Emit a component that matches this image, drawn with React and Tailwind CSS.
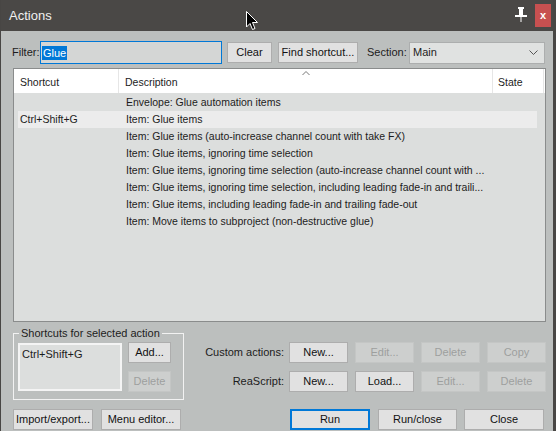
const rows = [
  { key: "", desc: "Envelope: Glue automation items" },
  { key: "Ctrl+Shift+G", desc: "Item: Glue items", selected: true },
  { key: "", desc: "Item: Glue items (auto-increase channel count with take FX)" },
  { key: "", desc: "Item: Glue items, ignoring time selection" },
  { key: "", desc: "Item: Glue items, ignoring time selection (auto-increase channel count with ..." },
  { key: "", desc: "Item: Glue items, ignoring time selection, including leading fade-in and traili..." },
  { key: "", desc: "Item: Glue items, including leading fade-in and trailing fade-out" },
  { key: "", desc: "Item: Move items to subproject (non-destructive glue)" },
];

// Win32-ish push button
const Btn = ({ children, w = "w-[59px]", disabled = false, primary = false, className = "" }) => {
  let look = "bg-[#e1e1e1] border border-[#adadad] text-[#111]";
  if (disabled) look = "bg-[#cdcfce] border border-[#c4c6c5] text-[#9d9f9e]";
  if (primary) look = "bg-[#e1e1e1] border-2 border-[#0078d7] text-[#111]";
  return (
    <div className={`${w} h-[21px] flex items-center justify-center text-[11px] leading-none ${look} ${className}`}>
      {children}
    </div>
  );
};

const Pin = () => (
  <svg width="12" height="15" viewBox="0 0 12 15" className="block">
    <rect x="3" y="0" width="6" height="2" fill="#fff" />
    <rect x="4" y="2" width="4" height="6" fill="#fff" />
    <rect x="0" y="8" width="12" height="2" fill="#fff" />
    <rect x="5.5" y="10" width="1" height="5" fill="#fff" />
  </svg>
);

const Cursor = () => (
  <svg width="13" height="20" viewBox="0 0 13 20" className="absolute left-[245px] top-[11px]">
    <path d="M0.5 0.5 L0.5 16 L4 12.5 L6.5 18.5 L9 17.5 L6.5 11.5 L11.5 11.5 Z" fill="#000" stroke="#fff" strokeWidth="1" strokeLinejoin="miter" />
  </svg>
);

export default function App() {
  return (
    <div className="w-[556px] h-[431px] bg-[#bcbfbe] flex flex-col overflow-hidden relative border-l border-r-[3px] border-[#484644] font-['Liberation_Sans',Arial,sans-serif] text-[#1c1c1c]">
      {/* Title bar */}
      <div className="h-[31px] shrink-0 bg-[#4a4846] flex items-center pl-[8px] pr-[2px]">
        <span className="text-[13px] text-[#f0f0f0]">Actions</span>
        <div className="flex-1" />
        <div className="mr-[8px] mt-[-2px]">
          <Pin />
        </div>
        <div className="w-[16px] h-[23px] bg-[#c75050] flex items-center justify-center text-white text-[11px] font-bold leading-none">
          x
        </div>
      </div>
      <Cursor />

      {/* Body */}
      <div className="flex-1 flex flex-col pl-[12px] pr-[7px] pt-[10px]">
        {/* Filter row */}
        <div className="h-[23px] flex items-center text-[11px]">
          <span className="w-[28px] -ml-px">Filter:</span>
          <div className="w-[182px] h-[23px] border border-[#0078d7] bg-[#d4d6d5] flex items-center pl-[1px]">
            <span className="bg-[#0078d7] text-white px-[1px] leading-[14px]">Glue</span>
          </div>
          <Btn w="w-[45px]" className="ml-[5px]">Clear</Btn>
          <Btn w="w-[80px]" className="ml-[6px]">Find shortcut...</Btn>
          <span className="ml-[9px] w-[42px]">Section:</span>
          <div className="w-[136px] h-[22px] border border-[#acaeae] bg-[#e0e2e1] flex items-center pl-[3px] pr-[6px]">
            <span className="flex-1">Main</span>
            <svg width="9" height="5" viewBox="0 0 9 5">
              <path d="M0.5 0.5 L4.5 4.5 L8.5 0.5" fill="none" stroke="#555" strokeWidth="1" />
            </svg>
          </div>
        </div>

        {/* Action list */}
        <div className="mt-[4px] h-[254px] shrink-0 border border-[#8a8c8c] bg-[#dcdedd] flex flex-col text-[10.5px]">
          <div className="h-[24px] bg-white flex items-center">
            <div className="w-[105px] h-full flex items-center pt-[3px] pl-[6px] border-r border-[#e6e6e6]">Shortcut</div>
            <div className="w-[374px] h-full flex items-center pt-[3px] pl-[6px] border-r border-[#e6e6e6] relative">
              Description
              <svg width="8" height="5" viewBox="0 0 8 5" className="absolute left-[183px] top-[2px]">
                <path d="M0.5 4 L4 0.5 L7.5 4" fill="none" stroke="#777" strokeWidth="1" />
              </svg>
            </div>
            <div className="w-[51px] h-full flex items-center pt-[3px] pl-[5px] border-r border-[#e6e6e6]">State</div>
          </div>
          <div className="pt-[1px] flex flex-col">
            {rows.map((r, i) => (
              <div
                key={i}
                className={`ml-[4px] w-[519px] h-[17px] flex items-center whitespace-nowrap ${r.selected ? "bg-[#ececec]" : ""}`}
              >
                <span className="w-[101px] pl-[2px]">{r.key}</span>
                <span className="pl-[7px]">{r.desc}</span>
              </div>
            ))}
          </div>
        </div>

        {/* Lower controls */}
        <div className="mt-[5px] flex text-[11px]">
          <fieldset className="w-[172px] border border-[#f2f2f2] pl-[4px] pr-[4px] pb-[7px] pt-[3px]">
            <legend className="ml-[1px] px-[2px] leading-[12px]">Shortcuts for selected action</legend>
            <div className="flex">
              <div className="w-[104px] h-[48px] border-2 border-[#f4f4f4] bg-[#dcdedd] pl-[2px] pt-[1px] mt-[1px]">
                Ctrl+Shift+G
              </div>
              <div className="ml-[6px] flex flex-col gap-[8px]">
                <Btn w="w-[43px]">Add...</Btn>
                <Btn w="w-[43px]" disabled>Delete</Btn>
              </div>
            </div>
          </fieldset>

          <div className="pt-[15px] flex flex-col gap-[8px]">
            <div className="flex items-center">
              <span className="w-[100px] text-right">Custom actions:</span>
              <div className="ml-[5px] flex gap-[7px]">
                <Btn>New...</Btn>
                <Btn disabled>Edit...</Btn>
                <Btn disabled>Delete</Btn>
                <Btn disabled>Copy</Btn>
              </div>
            </div>
            <div className="flex items-center">
              <span className="w-[100px] text-right">ReaScript:</span>
              <div className="ml-[5px] flex gap-[7px]">
                <Btn>New...</Btn>
                <Btn>Load...</Btn>
                <Btn disabled>Edit...</Btn>
                <Btn disabled>Delete</Btn>
              </div>
            </div>
          </div>
        </div>

        {/* Bottom buttons */}
        <div className="mt-[9px] flex text-[11px]">
          <Btn w="w-[80px]">Import/export...</Btn>
          <Btn w="w-[80px]" className="ml-[8px]">Menu editor...</Btn>
          <Btn w="w-[80px]" primary className="ml-[109px]">Run</Btn>
          <Btn w="w-[79px]" className="ml-[8px]">Run/close</Btn>
          <Btn w="w-[80px]" className="ml-[7px]">Close</Btn>
        </div>
      </div>
    </div>
  );
}
